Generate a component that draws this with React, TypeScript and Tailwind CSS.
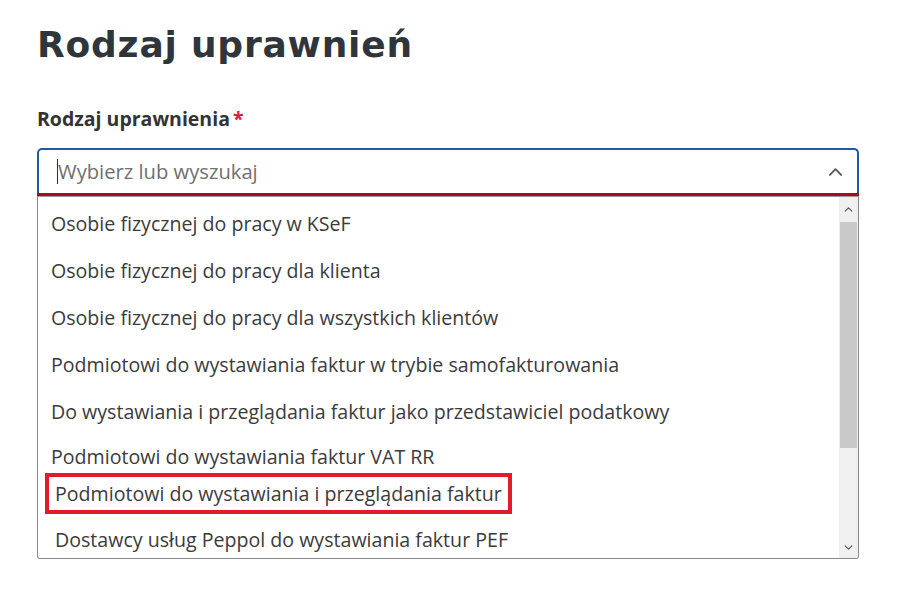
import * as React from 'react';

const options = [
  'Osobie fizycznej do pracy w KSeF',
  'Osobie fizycznej do pracy dla klienta',
  'Osobie fizycznej do pracy dla wszystkich klientów',
  'Podmiotowi do wystawiania faktur w trybie samofakturowania',
  'Do wystawiania i przeglądania faktur jako przedstawiciel podatkowy',
];

const ChevronUp = ({ className }: { className?: string }) => (
  <svg viewBox="0 0 16 10" className={className} fill="none" stroke="currentColor" strokeWidth={2} strokeLinecap="round" strokeLinejoin="round">
    <path d="M2 8 L8 2 L14 8" />
  </svg>
);

const App: React.FunctionComponent = () => {
  return (
    <div className="w-[898px] h-[593px] bg-white px-[37px] pt-[23px] font-['Open_Sans',sans-serif] text-[#333]">
      <h1 className="h-[44px] text-[36px] leading-[44px] font-bold tracking-[0.8px] text-[#2f353b] font-['DejaVu_Sans',sans-serif]">
        Rodzaj uprawnień
      </h1>

      <p className="mt-[40px] text-[19.5px] leading-[24px] font-bold text-[#333]">
        Rodzaj uprawnienia<span className="text-[#d4213d] ml-[3px]">*</span>
      </p>

      {/* combobox */}
      <div className="mt-[17px] w-[822px]">
        <div className="h-[45px] flex items-center border-2 border-b-0 border-[#1d5da6] rounded-t-[5px] pl-[18px] pr-[14px]">
          <span className="w-px h-[25px] bg-[#333]" />
          <span className="flex-1 text-[20.2px] text-[#707070] leading-none">Wybierz lub wyszukaj</span>
          <ChevronUp className="w-[15px] h-[10px] text-[#555]" />
        </div>
        <div className="h-[4px] bg-[#a3101d] border-b border-[#9a9a9a]" />

        <div className="h-[362px] flex border border-t-0 border-[#8a8a8a] rounded-b-[3px] overflow-hidden">
          <div className="flex-1 flex flex-col text-[19.6px] text-[#3b3b3b]">
            <div className="h-[3px]" />
            {options.map((o) => (
              <div key={o} className="h-[47px] flex items-center pl-[13px]">
                {o}
              </div>
            ))}
            <div className="h-[38px] flex items-center pl-[13px] pt-[6px]">Podmiotowi do wystawiania faktur VAT RR</div>
            <div className="ml-[7px] w-[467px] h-[41px] flex items-center border-[4px] border-[#e11b2a] pl-[6px]">
              Podmiotowi do wystawiania i przeglądania faktur
            </div>
            <div className="flex-1 flex items-center pl-[17px] pt-[8px]">Dostawcy usług Peppol do wystawiania faktur PEF</div>
          </div>

          {/* scrollbar */}
          <div className="w-[19px] flex flex-col bg-[#f0f0f0]">
            <div className="h-[25px] flex items-center justify-center">
              <ChevronUp className="w-[9px] h-[7px] text-[#555]" />
            </div>
            <div className="h-[226px] mx-[1px] bg-[#c9c9c9]" />
            <div className="flex-1" />
            <div className="h-[22px] flex items-center justify-center">
              <ChevronUp className="w-[9px] h-[7px] text-[#555] rotate-180" />
            </div>
          </div>
        </div>
      </div>
    </div>
  );
};

export default App;
